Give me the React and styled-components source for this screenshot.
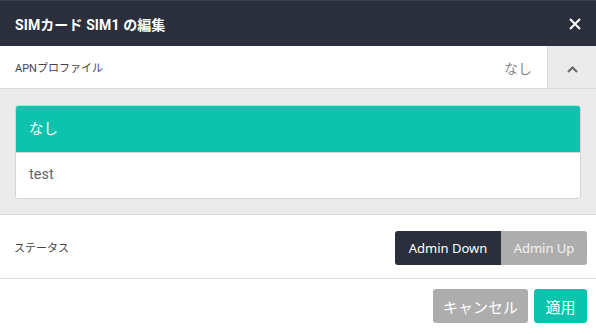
import React from 'react'
import styled, { createGlobalStyle } from 'styled-components'

const Global = createGlobalStyle`
  html, body {
    margin: 0;
    padding: 0;
    background: #fff;
  }
  * {
    box-sizing: border-box;
  }
`

const Modal = styled.div`
  width: 596px;
  height: 334px;
  display: flex;
  flex-direction: column;
  font-family: Roboto, 'Noto Sans CJK JP', sans-serif;
  background: #fff;
  overflow: hidden;
`

const Header = styled.div`
  height: 46px;
  background: #2b2f3b;
  border-top: 1px solid #3a3e4a;
  display: flex;
  align-items: center;
  justify-content: space-between;
  padding: 0 14px 0 15px;
`

const Title = styled.h1`
  margin: 0;
  color: #fff;
  font-size: 14px;
  font-weight: 700;
  letter-spacing: 0.1px;
`

const CloseBtn = styled.button`
  all: unset;
  width: 14px;
  height: 14px;
  display: flex;
  align-items: center;
  justify-content: center;
  cursor: pointer;
`

const ApnRow = styled.div`
  height: 43px;
  display: flex;
  border-bottom: 1px solid #dcdcdc;
`

const ApnMain = styled.div`
  flex: 1;
  display: flex;
  align-items: center;
  justify-content: space-between;
  padding: 0 15px 0 15px;
`

const FieldLabel = styled.span`
  font-size: 11px;
  color: #444;
`

const ApnValue = styled.span`
  font-size: 14px;
  color: #888;
  padding-top: 1px;
`

const ChevronBox = styled.div`
  width: 49px;
  background: #ebebeb;
  border-left: 1px solid #dcdcdc;
  display: flex;
  align-items: center;
  justify-content: center;
  padding-top: 5px;
`

const ListArea = styled.div`
  height: 126px;
  background: #ebebeb;
  padding: 16px 15px 0 15px;
  border-bottom: 1px solid #dcdcdc;
`

const Card = styled.div`
  background: #fff;
  border: 1px solid #d4d4d4;
  border-radius: 3px;
  overflow: hidden;
`

const Item = styled.div`
  height: 46px;
  display: flex;
  align-items: center;
  padding: 0 13px 3px 13px;
  font-size: 14.5px;
  background: ${(p) => (p.active ? '#0dc3ad' : '#fff')};
  color: ${(p) => (p.active ? '#fff' : '#666')};
  border-top: ${(p) => (p.first ? 'none' : '1px solid #d4d4d4')};
`

const StatusRow = styled.div`
  height: 64px;
  display: flex;
  align-items: center;
  justify-content: space-between;
  padding: 0 9px 0 14px;
  border-bottom: 1px solid #dcdcdc;
`

const Toggle = styled.div`
  display: flex;
  border-radius: 3px;
  overflow: hidden;
  margin-top: 2px;
`

const ToggleBtn = styled.button`
  all: unset;
  height: 34px;
  width: ${(p) => p.w}px;
  justify-content: center;
  display: flex;
  align-items: center;
  font-family: 'Noto Sans', Roboto, sans-serif;
  font-size: 13px;
  color: ${(p) => (p.active ? '#fff' : '#f4f4f4')};
  background: ${(p) => (p.active ? '#2b2f3b' : '#adadad')};
  cursor: pointer;
`

const Footer = styled.div`
  flex: 1;
  display: flex;
  justify-content: flex-end;
  align-items: flex-start;
  gap: 6px;
  padding: 10px 9px 0 0;
`

const Btn = styled.button`
  all: unset;
  height: 34px;
  width: ${(p) => p.w}px;
  display: flex;
  align-items: center;
  justify-content: center;
  border-radius: 3px;
  font-family: Roboto, 'Noto Sans CJK JP', sans-serif;
  font-size: 15px;
  color: #fff;
  background: ${(p) => p.bg};
  cursor: pointer;
`

const App = () => {
  return (
    <Modal>
      <Global />
      <Header>
        <Title>SIMカード SIM1 の編集</Title>
        <CloseBtn>
          <svg width='12' height='12' viewBox='0 0 12 12'>
            <path d='M1 1L11 11M11 1L1 11' stroke='#fff' strokeWidth='2' />
          </svg>
        </CloseBtn>
      </Header>
      <ApnRow>
        <ApnMain>
          <FieldLabel>APNプロファイル</FieldLabel>
          <ApnValue>なし</ApnValue>
        </ApnMain>
        <ChevronBox>
          <svg width='11' height='7' viewBox='0 0 11 7'>
            <path d='M1 6L5.5 1.5L10 6' stroke='#666' strokeWidth='2' fill='none' />
          </svg>
        </ChevronBox>
      </ApnRow>
      <ListArea>
        <Card>
          <Item active first>
            なし
          </Item>
          <Item>test</Item>
        </Card>
      </ListArea>
      <StatusRow>
        <FieldLabel>ステータス</FieldLabel>
        <Toggle>
          <ToggleBtn active w={106}>
            Admin Down
          </ToggleBtn>
          <ToggleBtn w={86}>Admin Up</ToggleBtn>
        </Toggle>
      </StatusRow>
      <Footer>
        <Btn bg='#adadad' w={95}>
          キャンセル
        </Btn>
        <Btn bg='#0dc3ad' w={53}>
          適用
        </Btn>
      </Footer>
    </Modal>
  )
}

export default App
